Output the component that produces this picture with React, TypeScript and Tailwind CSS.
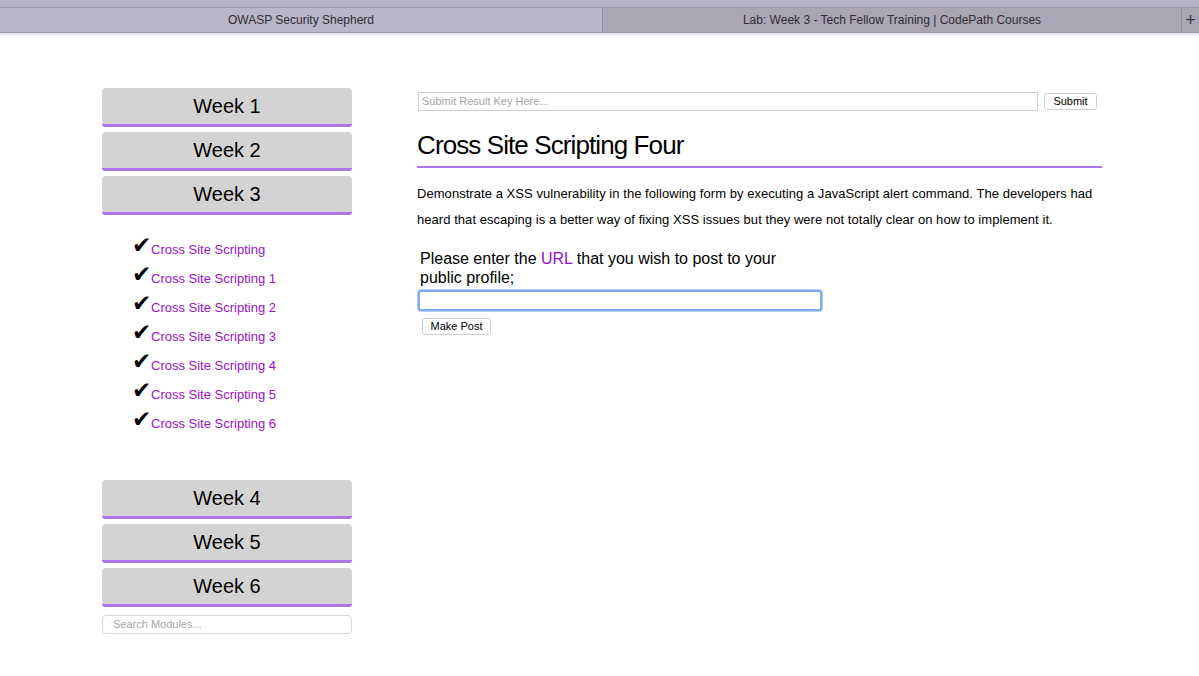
import React from "react";

const weeksTop = ["Week 1", "Week 2", "Week 3"];
const weeksBottom = ["Week 4", "Week 5", "Week 6"];
const modules = [
  "Cross Site Scripting",
  "Cross Site Scripting 1",
  "Cross Site Scripting 2",
  "Cross Site Scripting 3",
  "Cross Site Scripting 4",
  "Cross Site Scripting 5",
  "Cross Site Scripting 6",
];

function WeekButton({ label }: { label: string }) {
  return (
    <div className="h-[39px] w-[250px] rounded-t-[4px] rounded-b-[3px] bg-[#d3d3d3] border-b-[3px] border-[#a777ea] flex items-center justify-center text-[20px] text-black leading-none">
      {label}
    </div>
  );
}

export default function App() {
  return (
    <div className="w-[1199px] h-[676px] bg-white overflow-hidden" style={{ fontFamily: '"Liberation Sans", Arial, sans-serif' }}>
      {/* browser chrome */}
      <div className="h-[8px] bg-[#b7b3c6] border-b border-[#9d99ab]" />
      <div className="h-[25px] flex border-b border-[#9a96a8] text-[12px] text-[#2e2c33]">
        <div className="w-[602px] bg-[#bab6c9] flex items-center justify-center">OWASP Security Shepherd</div>
        <div className="w-[579px] bg-[#aaa6b6] border-l border-[#9692a3] flex items-center justify-center">
          Lab: Week 3 - Tech Fellow Training | CodePath Courses
        </div>
        <div className="flex-1 bg-[#aaa6b6] border-l border-[#9692a3] flex items-center justify-center text-[18px] font-light text-[#3a3840]">+</div>
      </div>
      <div className="h-[5px] bg-gradient-to-b from-[#e6e2f3] to-white" />

      <div className="flex pt-[50px]">
        {/* sidebar */}
        <div className="ml-[102px] w-[250px] flex flex-col">
          <div className="flex flex-col gap-[5px]">
            {weeksTop.map((w) => (
              <WeekButton key={w} label={w} />
            ))}
          </div>
          <ul className="mt-[14px] pl-[31px] flex flex-col">
            {modules.map((m) => (
              <li key={m} className="h-[29px] flex items-end">
                <span className="text-[23px] leading-none text-black w-[18px] mb-[1px] -ml-[1px]" style={{ fontFamily: '"DejaVu Sans", sans-serif' }}>
                  ✔
                </span>
                <span className="text-[13px] text-[#9b10c9] leading-[17px] ml-[1px]">{m}</span>
              </li>
            ))}
          </ul>
          <div className="mt-[48px] flex flex-col gap-[5px]">
            {weeksBottom.map((w) => (
              <WeekButton key={w} label={w} />
            ))}
          </div>
          <div className="mt-[8px] h-[19px] w-[250px] rounded-[4px] border border-[#d6d6d6] px-[10px] flex items-center text-[11px] text-[#a6a6a6]">
            Search Modules...
          </div>
        </div>

        {/* main */}
        <div className="ml-[65px] w-[685px] flex flex-col">
          <div className="flex items-center mt-[4px]">
            <div className="ml-[1px] w-[620px] h-[19px] border border-[#cfcfcf] px-[3px] flex items-center text-[11px] text-[#a5a5a5]">
              Submit Result Key Here...
            </div>
            <div className="ml-[6px] w-[53px] h-[17px] border border-[#cfcfcf] rounded-[3px] bg-white flex items-center justify-center text-[11px] text-black">
              Submit
            </div>
          </div>
          <h1 className="mt-[19px] text-[26px] tracking-[-0.9px] leading-[30px] text-black">Cross Site Scripting Four</h1>
          <div className="mt-[6px] h-[2px] bg-[#a777ea]" />
          <p className="mt-[13px] text-[13px] leading-[26px] text-black tracking-[0.05px]">
            Demonstrate a XSS vulnerability in the following form by executing a JavaScript alert command. The developers had heard that escaping is a better way of fixing XSS issues but they were not totally clear on how to implement it.
          </p>
          <div className="mt-[16px] ml-[3px] w-[380px] text-[16px] leading-[19px] text-black">
            Please enter the <span className="text-[#9b10c9]">URL</span> that you wish to post to your public profile;
          </div>
          <div className="mt-[3px] ml-[1px] w-[404px] h-[21px] rounded-[3px] border-[2px] border-[#7fabf0] bg-white shadow-[0_0_0_1px_#b9d0f5]" />
          <div className="mt-[7px] ml-[5px] w-[69px] h-[17px] border border-[#cfcfcf] rounded-[3px] bg-white flex items-center justify-center text-[11px] text-black">
            Make Post
          </div>
        </div>
      </div>
    </div>
  );
}
